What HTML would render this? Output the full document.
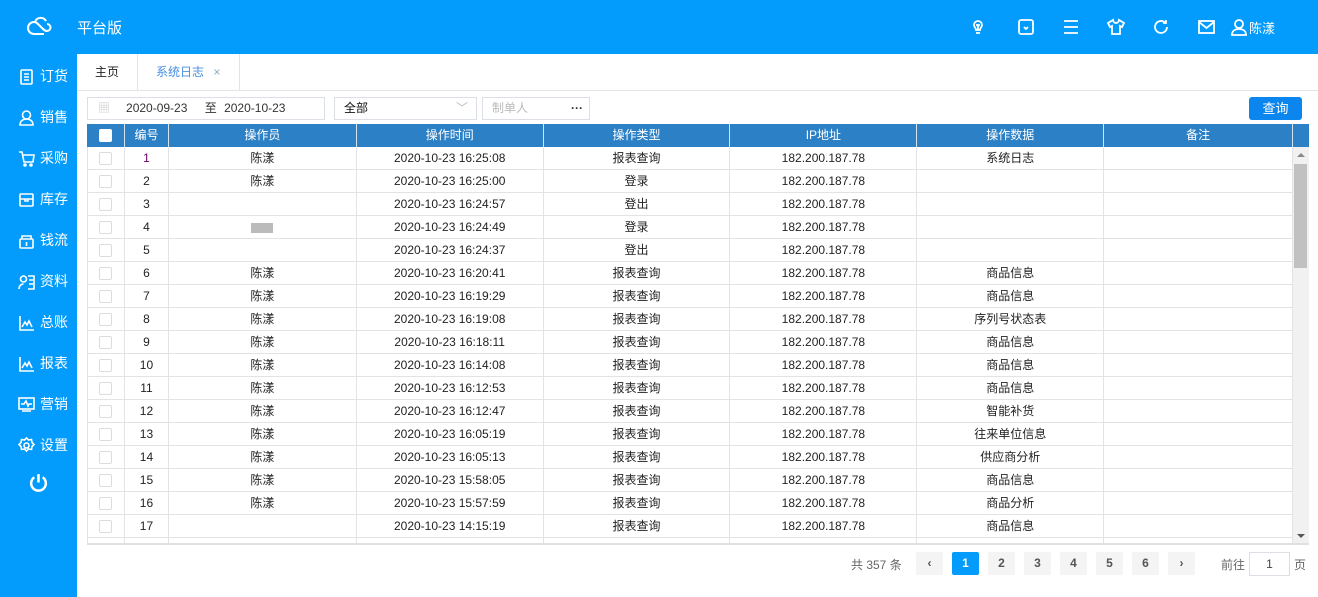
<!DOCTYPE html>
<html><head><meta charset="utf-8"><style>
*{margin:0;padding:0;box-sizing:border-box}
body{width:1318px;height:597px;overflow:hidden;background:#fff;font-family:"Liberation Sans","Noto Sans CJK SC",sans-serif;font-size:12px;color:#222;position:relative}
.hdr{position:absolute;left:0;top:0;width:1318px;height:54px;background:#039cfd}
.side{position:absolute;left:0;top:54px;width:77px;height:543px;background:#039cfd}
.side .it{position:absolute;left:18px;color:#fff;font-size:14px;display:flex;align-items:center;gap:5px}
.side svg{width:17px;height:17px;stroke:#fff;fill:none;stroke-width:1.6}
.ti{position:absolute;top:17px;width:20px;height:20px;stroke:#fff;fill:none;stroke-width:1.8}
.tabs{position:absolute;left:77px;top:54px;width:1241px;height:37px;border-bottom:1px solid #e4e4e4;background:#fff}
.tab{position:absolute;top:0;height:37px;line-height:37px;font-size:12px;border-right:1px solid #e4e4e4}
.in{position:absolute;top:97px;height:23px;border:1px solid #dcdfe6;background:#fff;font-size:12px;line-height:21px}
.tb{position:absolute;left:87px;top:124px;width:1206px}
.r{display:flex;height:23px;border-bottom:1px solid #e3e3e3;border-left:1px solid #e3e3e3}
.r>div{height:22px;line-height:22px;text-align:center;border-right:1px solid #e3e3e3;white-space:nowrap;overflow:hidden}
.h{background:#2c80c5;color:#fff;border-color:#2c80c5;height:23px}
.h>div{border-right-color:#d6e4f0;height:23px;line-height:23px}
.c0{width:37px}.c1{width:44px}.c2{width:188px}.c3,.c4,.c5,.c6{width:187px}.c7{width:189px}
.cb{display:inline-block;width:13px;height:13px;border:1px solid #dcdcdc;border-radius:2px;vertical-align:middle;background:#fff}
.h .cb{border-color:#fff}
.pg{position:absolute;top:552px;width:27px;height:23px;background:#f4f4f5;color:#555;font-weight:bold;text-align:center;line-height:23px;border-radius:2px;font-size:12px}
</style></head><body>
<div class="hdr">
<svg style="position:absolute;left:25px;top:13px" width="28" height="28" viewBox="0 0 28 28" fill="none" stroke="#fff" stroke-width="2"><path d="M9 21a6 6 0 0 1 0-12c2 0 3 1 5 3l3 3c2 2 3 3 5 3a3.5 3.5 0 0 0 0-7"/><path d="M19 21H9M10 9a6 6 0 0 1 11-1"/></svg>
<div style="position:absolute;left:77px;top:17px;color:#fff;font-size:15px">平台版</div>
<svg class="ti" style="left:968px" viewBox="0 0 20 20"><path d="M6 8a4 4 0 1 1 8 0c0 2-2 3-2 5H8c0-2-2-3-2-5zM8 16h4M8 8h4M10 8v5"/></svg>
<svg class="ti" style="left:1016px" viewBox="0 0 20 20"><rect x="3" y="3" width="14" height="14" rx="2"/><path d="M8 10l2 2 2-2"/></svg>
<svg class="ti" style="left:1061px" viewBox="0 0 20 20"><path d="M3 4h14M3 10h14M3 16h14"/></svg>
<svg class="ti" style="left:1106px" viewBox="0 0 20 20"><path d="M7 3L2 6l2 4 2-1v8h8V9l2 1 2-4-5-3c0 2-2 3-3 3S7 5 7 3z"/></svg>
<svg class="ti" style="left:1151px" viewBox="0 0 20 20"><path d="M16 10a6 6 0 1 1-2-4.5M15 3v3h-3"/></svg>
<svg class="ti" style="left:1196px" viewBox="0 0 20 20"><rect x="3" y="4" width="15" height="12"/><path d="M3 5l7.5 6L18 5"/></svg>
<svg class="ti" style="left:1229px" viewBox="0 0 20 20"><circle cx="10" cy="7" r="4"/><path d="M3 18c0-4 3-6 7-6s7 2 7 6z"/></svg>
<div style="position:absolute;left:1249px;top:18px;color:#fff;font-size:13px">陈漾</div>
</div>
<div class="side">
<div class="it" style="top:12px"><svg viewBox="0 0 17 17"><rect x="3" y="2" width="11" height="14" rx="1"/><path d="M6 6h5M6 9h5M6 12h5"/></svg>订货</div>
<div class="it" style="top:53px"><svg viewBox="0 0 17 17"><circle cx="8.5" cy="6" r="4"/><path d="M2 16c0-4 3-6 6.5-6s6.5 2 6.5 6z"/></svg>销售</div>
<div class="it" style="top:94px"><svg viewBox="0 0 17 17"><path d="M1 2h3l2 10h9l1-7H5"/><circle cx="7" cy="15" r="1"/><circle cx="13" cy="15" r="1"/></svg>采购</div>
<div class="it" style="top:135px"><svg viewBox="0 0 17 17"><rect x="2" y="3" width="13" height="12" rx="1"/><path d="M2 8h13M7 8v2h3V8"/></svg>库存</div>
<div class="it" style="top:176px"><svg viewBox="0 0 17 17"><rect x="2" y="7" width="13" height="9" rx="1"/><path d="M4 7V4h9v3M8.5 10v4"/></svg>钱流</div>
<div class="it" style="top:217px"><svg viewBox="0 0 17 17"><circle cx="5.5" cy="6" r="3"/><path d="M1 16c0-3 2-5 4.5-5M10 3h6v13h-6M11 7h4M11 11h4"/></svg>资料</div>
<div class="it" style="top:258px"><svg viewBox="0 0 17 17"><path d="M2 2v14h14M4 13l3-5 2 3 2-4 3 6"/></svg>总账</div>
<div class="it" style="top:299px"><svg viewBox="0 0 17 17"><path d="M2 2v14h14M4 13l3-5 2 3 2-4 3 6"/></svg>报表</div>
<div class="it" style="top:340px"><svg viewBox="0 0 17 17"><rect x="1" y="2" width="15" height="11"/><path d="M4 15h9M3 8h3l2-3 2 5 1-2h3"/></svg>营销</div>
<div class="it" style="top:381px"><svg viewBox="0 0 17 17"><circle cx="8.5" cy="8.5" r="2.5"/><path d="M8.5 1l2 2 3-.5.5 3 2 2-2 2-.5 3-3-.5-2 2-2-2-3 .5-.5-3-2-2 2-2 .5-3 3 .5z"/></svg>设置</div>
<svg style="position:absolute;left:28px;top:418px;width:21px;height:21px;stroke-width:2.4" viewBox="0 0 20 20"><path d="M10 2v8M6 5a7 7 0 1 0 8 0"/></svg>
</div>
<div class="tabs">
<div class="tab" style="left:0;width:61px;padding-left:18px">主页</div>
<div class="tab" style="left:61px;width:102px;padding-left:18px;color:#4a8fe0">系统日志 <span style="color:#8ab;margin-left:6px">×</span></div>
</div>
<div class="in" style="left:87px;width:238px;color:#333"><span style="color:#ccc;margin:0 16px 0 10px">▦</span>2020-09-23 <span style="margin:0 4px 0 14px">至</span> 2020-10-23</div>
<div class="in" style="left:334px;width:143px;padding-left:9px;color:#111">全部<span style="position:absolute;right:8px;color:#bbb">﹀</span></div>
<div class="in" style="left:482px;width:108px;padding-left:9px;color:#bbb">制单人<span style="position:absolute;right:6px;color:#333;font-weight:bold">···</span></div>
<div style="position:absolute;left:1249px;top:97px;width:53px;height:23px;background:#0a86ee;border-radius:3px;color:#fff;font-size:13px;text-align:center;line-height:23px">查询</div>
<div style="position:absolute;left:1293px;top:124px;width:16px;height:23px;background:#2c80c5"></div>
<div class="tb">
<div class="r h"><div class="c0"><span class="cb"></span></div><div class="c1">编号</div><div class="c2">操作员</div><div class="c3">操作时间</div><div class="c4">操作类型</div><div class="c5">IP地址</div><div class="c6">操作数据</div><div class="c7">备注</div></div>
<div class="r"><div class="c0"><span class="cb"></span></div><div class="c1" style="color:#606">1</div><div class="c2">陈漾</div><div class="c3">2020-10-23 16:25:08</div><div class="c4">报表查询</div><div class="c5">182.200.187.78</div><div class="c6">系统日志</div><div class="c7"></div></div>
<div class="r"><div class="c0"><span class="cb"></span></div><div class="c1">2</div><div class="c2">陈漾</div><div class="c3">2020-10-23 16:25:00</div><div class="c4">登录</div><div class="c5">182.200.187.78</div><div class="c6"></div><div class="c7"></div></div>
<div class="r"><div class="c0"><span class="cb"></span></div><div class="c1">3</div><div class="c2"></div><div class="c3">2020-10-23 16:24:57</div><div class="c4">登出</div><div class="c5">182.200.187.78</div><div class="c6"></div><div class="c7"></div></div>
<div class="r"><div class="c0"><span class="cb"></span></div><div class="c1">4</div><div class="c2"><span style="display:inline-block;width:22px;height:10px;background:#bbb;vertical-align:middle"></span></div><div class="c3">2020-10-23 16:24:49</div><div class="c4">登录</div><div class="c5">182.200.187.78</div><div class="c6"></div><div class="c7"></div></div>
<div class="r"><div class="c0"><span class="cb"></span></div><div class="c1">5</div><div class="c2"></div><div class="c3">2020-10-23 16:24:37</div><div class="c4">登出</div><div class="c5">182.200.187.78</div><div class="c6"></div><div class="c7"></div></div>
<div class="r"><div class="c0"><span class="cb"></span></div><div class="c1">6</div><div class="c2">陈漾</div><div class="c3">2020-10-23 16:20:41</div><div class="c4">报表查询</div><div class="c5">182.200.187.78</div><div class="c6">商品信息</div><div class="c7"></div></div>
<div class="r"><div class="c0"><span class="cb"></span></div><div class="c1">7</div><div class="c2">陈漾</div><div class="c3">2020-10-23 16:19:29</div><div class="c4">报表查询</div><div class="c5">182.200.187.78</div><div class="c6">商品信息</div><div class="c7"></div></div>
<div class="r"><div class="c0"><span class="cb"></span></div><div class="c1">8</div><div class="c2">陈漾</div><div class="c3">2020-10-23 16:19:08</div><div class="c4">报表查询</div><div class="c5">182.200.187.78</div><div class="c6">序列号状态表</div><div class="c7"></div></div>
<div class="r"><div class="c0"><span class="cb"></span></div><div class="c1">9</div><div class="c2">陈漾</div><div class="c3">2020-10-23 16:18:11</div><div class="c4">报表查询</div><div class="c5">182.200.187.78</div><div class="c6">商品信息</div><div class="c7"></div></div>
<div class="r"><div class="c0"><span class="cb"></span></div><div class="c1">10</div><div class="c2">陈漾</div><div class="c3">2020-10-23 16:14:08</div><div class="c4">报表查询</div><div class="c5">182.200.187.78</div><div class="c6">商品信息</div><div class="c7"></div></div>
<div class="r"><div class="c0"><span class="cb"></span></div><div class="c1">11</div><div class="c2">陈漾</div><div class="c3">2020-10-23 16:12:53</div><div class="c4">报表查询</div><div class="c5">182.200.187.78</div><div class="c6">商品信息</div><div class="c7"></div></div>
<div class="r"><div class="c0"><span class="cb"></span></div><div class="c1">12</div><div class="c2">陈漾</div><div class="c3">2020-10-23 16:12:47</div><div class="c4">报表查询</div><div class="c5">182.200.187.78</div><div class="c6">智能补货</div><div class="c7"></div></div>
<div class="r"><div class="c0"><span class="cb"></span></div><div class="c1">13</div><div class="c2">陈漾</div><div class="c3">2020-10-23 16:05:19</div><div class="c4">报表查询</div><div class="c5">182.200.187.78</div><div class="c6">往来单位信息</div><div class="c7"></div></div>
<div class="r"><div class="c0"><span class="cb"></span></div><div class="c1">14</div><div class="c2">陈漾</div><div class="c3">2020-10-23 16:05:13</div><div class="c4">报表查询</div><div class="c5">182.200.187.78</div><div class="c6">供应商分析</div><div class="c7"></div></div>
<div class="r"><div class="c0"><span class="cb"></span></div><div class="c1">15</div><div class="c2">陈漾</div><div class="c3">2020-10-23 15:58:05</div><div class="c4">报表查询</div><div class="c5">182.200.187.78</div><div class="c6">商品信息</div><div class="c7"></div></div>
<div class="r"><div class="c0"><span class="cb"></span></div><div class="c1">16</div><div class="c2">陈漾</div><div class="c3">2020-10-23 15:57:59</div><div class="c4">报表查询</div><div class="c5">182.200.187.78</div><div class="c6">商品分析</div><div class="c7"></div></div>
<div class="r"><div class="c0"><span class="cb"></span></div><div class="c1">17</div><div class="c2"></div><div class="c3">2020-10-23 14:15:19</div><div class="c4">报表查询</div><div class="c5">182.200.187.78</div><div class="c6">商品信息</div><div class="c7"></div></div>
<div class="r" style="height:5px;border-bottom:0"><div class="c0" style="height:5px"></div><div class="c1" style="height:5px"></div><div class="c2" style="height:5px"></div><div class="c3" style="height:5px"></div><div class="c4" style="height:5px"></div><div class="c5" style="height:5px"></div><div class="c6" style="height:5px"></div><div class="c7" style="height:5px"></div></div>
</div>
<div style="position:absolute;left:87px;top:543px;width:1222px;height:2px;background:#e0e0e0"></div>
<div style="position:absolute;left:1293px;top:147px;width:16px;height:396px;background:#f1f1f1">
<div style="position:absolute;left:1px;top:17px;width:13px;height:104px;background:#c1c1c1"></div>
<div style="position:absolute;left:4px;top:6px;border:4px solid transparent;border-bottom-color:#888;border-top:0"></div>
<div style="position:absolute;left:4px;bottom:5px;border:4px solid transparent;border-top-color:#555;border-bottom:0"></div>
</div>
<div style="position:absolute;left:851px;top:556px;color:#666;font-size:12px">共 357 条</div>
<div class="pg" style="left:916px">‹</div>
<div class="pg" style="left:952px;background:#039cfd;color:#fff">1</div>
<div class="pg" style="left:988px">2</div>
<div class="pg" style="left:1024px">3</div>
<div class="pg" style="left:1060px">4</div>
<div class="pg" style="left:1096px">5</div>
<div class="pg" style="left:1132px">6</div>
<div class="pg" style="left:1168px">›</div>
<div style="position:absolute;left:1221px;top:556px;color:#666">前往</div>
<div style="position:absolute;left:1249px;top:552px;width:41px;height:24px;border:1px solid #dcdfe6;text-align:center;line-height:22px;color:#444">1</div>
<div style="position:absolute;left:1294px;top:556px;color:#666">页</div>
</body></html>
